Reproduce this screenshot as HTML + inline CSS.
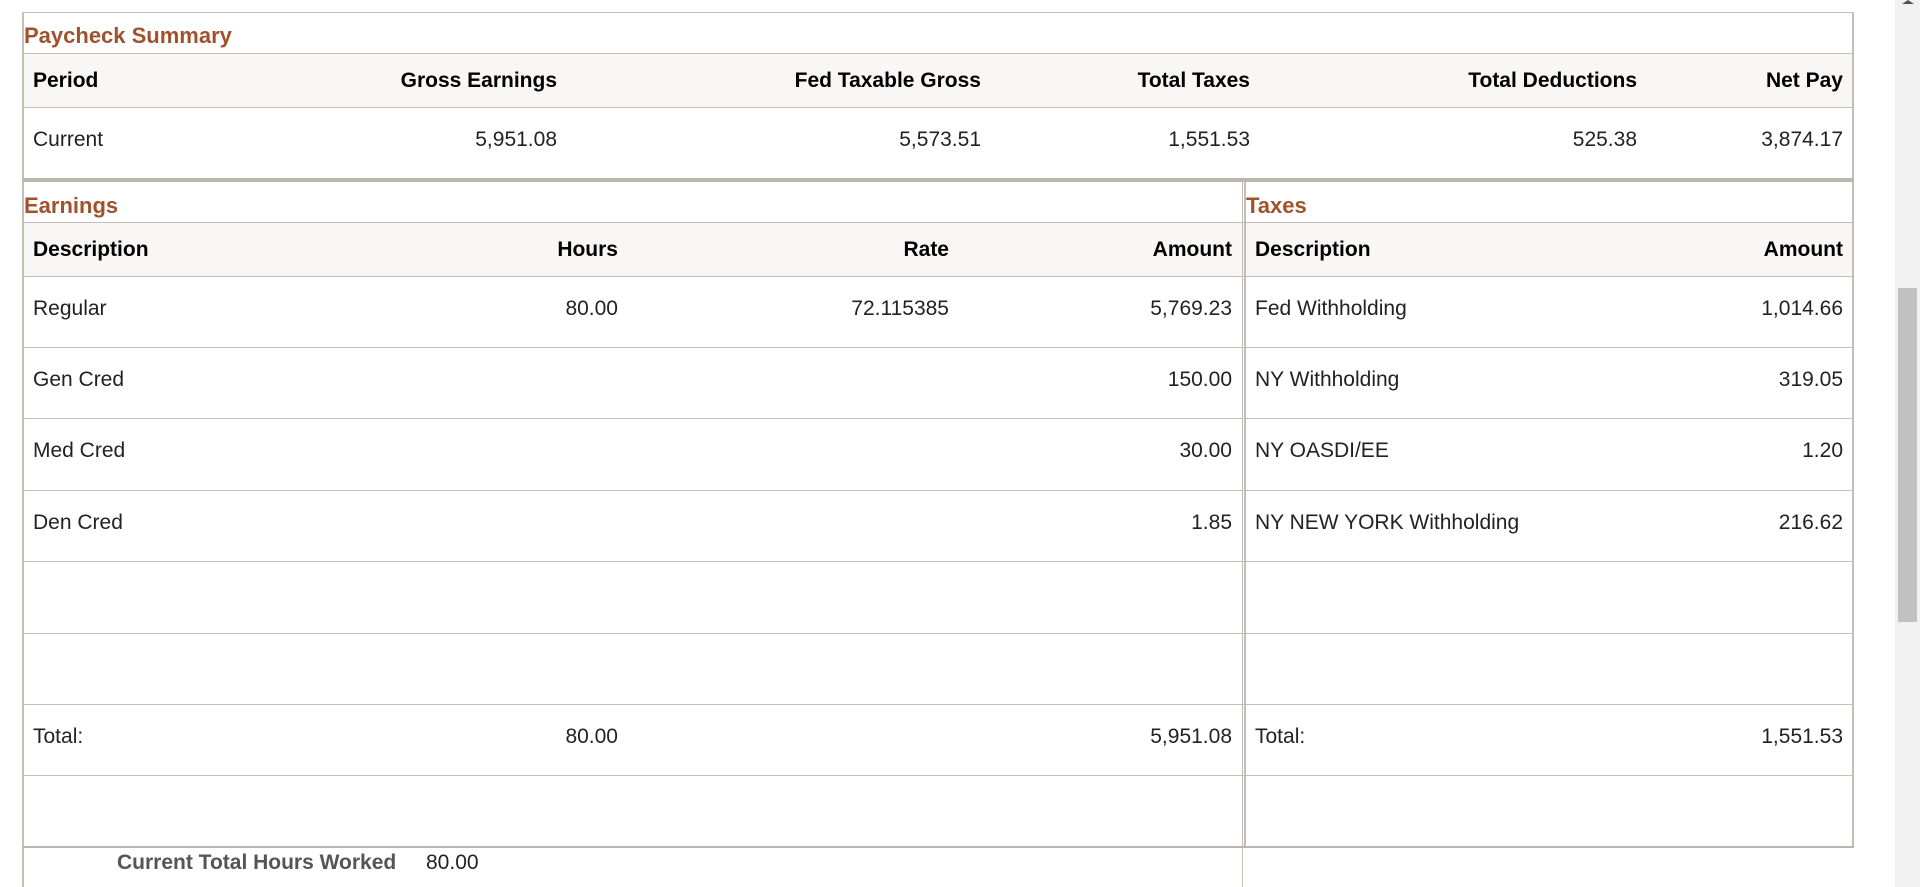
<!DOCTYPE html>
<html><head><meta charset="utf-8"><style>
html,body{margin:0;padding:0;background:#fff;width:1920px;height:887px;overflow:hidden;font-family:"Liberation Sans",Arial,sans-serif;}
.a{position:absolute;}
.t{position:absolute;display:flex;align-items:center;font-size:21px;color:#222;white-space:nowrap;}
.r{justify-content:flex-end;}
.b{font-weight:bold;color:#000;}
.h{position:absolute;color:#a0522d;font-weight:bold;font-size:22px;}
.hl{position:absolute;height:1px;background:#c4beb8;}
.vl{position:absolute;width:1px;background:#c4beb8;}
.bg{position:absolute;background:#f8f7f5;}
</style></head><body>
<!-- summary box -->
<div class="hl" style="left:22px;top:12px;width:1832px;"></div>
<div class="vl" style="left:22px;top:12px;height:875px;width:2px;"></div>
<div class="vl" style="left:1852px;top:12px;height:168px;width:2px;"></div>
<div class="h" style="left:24px;top:23px;">Paycheck Summary</div>
<div class="bg" style="left:24px;top:54px;width:1828px;height:53px;"></div>
<div class="hl" style="left:22px;top:53px;width:1832px;"></div>
<div class="hl" style="left:22px;top:107px;width:1832px;"></div>
<div class="a" style="left:22px;top:178px;width:1832px;height:4px;background:#bcb6af;"></div>
<div class="t b" style="left:33px;top:54px;height:53px;">Period</div>
<div class="t b r" style="right:1363px;top:54px;height:53px;">Gross Earnings</div>
<div class="t b r" style="right:939px;top:54px;height:53px;">Fed Taxable Gross</div>
<div class="t b r" style="right:670px;top:54px;height:53px;">Total Taxes</div>
<div class="t b r" style="right:283px;top:54px;height:53px;">Total Deductions</div>
<div class="t b r" style="right:77px;top:54px;height:53px;">Net Pay</div>
<div class="t" style="left:33px;top:107px;height:66px;">Current</div>
<div class="t r" style="right:1363px;top:107px;height:66px;">5,951.08</div>
<div class="t r" style="right:939px;top:107px;height:66px;">5,573.51</div>
<div class="t r" style="right:670px;top:107px;height:66px;">1,551.53</div>
<div class="t r" style="right:283px;top:107px;height:66px;">525.38</div>
<div class="t r" style="right:77px;top:107px;height:66px;">3,874.17</div>

<!-- earnings / taxes -->
<div class="h" style="left:24px;top:193px;">Earnings</div>
<div class="h" style="left:1246px;top:193px;">Taxes</div>
<div class="bg" style="left:24px;top:223px;width:1828px;height:53px;"></div>
<div class="vl" style="left:1242px;top:182px;height:705px;"></div>
<div class="vl" style="left:1244px;top:182px;height:665px;width:2px;"></div>
<div class="vl" style="left:1852px;top:182px;height:665px;width:2px;"></div>
<div class="hl" style="left:22px;top:222px;width:1832px;"></div>
<div class="hl" style="left:22px;top:276px;width:1832px;"></div>
<div class="hl" style="left:22px;top:347px;width:1832px;"></div>
<div class="hl" style="left:22px;top:418px;width:1832px;"></div>
<div class="hl" style="left:22px;top:490px;width:1832px;"></div>
<div class="hl" style="left:22px;top:561px;width:1832px;"></div>
<div class="hl" style="left:22px;top:633px;width:1832px;"></div>
<div class="hl" style="left:22px;top:704px;width:1832px;"></div>
<div class="hl" style="left:22px;top:775px;width:1832px;"></div>
<div class="hl" style="left:22px;top:846px;width:1832px;height:2px;background:#bcb6af;"></div>

<div class="t b" style="left:33px;top:223px;height:53px;">Description</div>
<div class="t b r" style="right:1302px;top:223px;height:53px;">Hours</div>
<div class="t b r" style="right:971px;top:223px;height:53px;">Rate</div>
<div class="t b r" style="right:688px;top:223px;height:53px;">Amount</div>
<div class="t b" style="left:1255px;top:223px;height:53px;">Description</div>
<div class="t b r" style="right:77px;top:223px;height:53px;">Amount</div>

<div class="t" style="left:33px;top:276px;height:66px;">Regular</div>
<div class="t r" style="right:1302px;top:276px;height:66px;">80.00</div>
<div class="t r" style="right:971px;top:276px;height:66px;">72.115385</div>
<div class="t r" style="right:688px;top:276px;height:66px;">5,769.23</div>
<div class="t" style="left:1255px;top:276px;height:66px;">Fed Withholding</div>
<div class="t r" style="right:77px;top:276px;height:66px;">1,014.66</div>

<div class="t" style="left:33px;top:347px;height:66px;">Gen Cred</div>
<div class="t r" style="right:688px;top:347px;height:66px;">150.00</div>
<div class="t" style="left:1255px;top:347px;height:66px;">NY Withholding</div>
<div class="t r" style="right:77px;top:347px;height:66px;">319.05</div>

<div class="t" style="left:33px;top:418px;height:66px;">Med Cred</div>
<div class="t r" style="right:688px;top:418px;height:66px;">30.00</div>
<div class="t" style="left:1255px;top:418px;height:66px;">NY OASDI/EE</div>
<div class="t r" style="right:77px;top:418px;height:66px;">1.20</div>

<div class="t" style="left:33px;top:490px;height:66px;">Den Cred</div>
<div class="t r" style="right:688px;top:490px;height:66px;">1.85</div>
<div class="t" style="left:1255px;top:490px;height:66px;">NY NEW YORK Withholding</div>
<div class="t r" style="right:77px;top:490px;height:66px;">216.62</div>

<div class="t" style="left:33px;top:704px;height:66px;">Total:</div>
<div class="t r" style="right:1302px;top:704px;height:66px;">80.00</div>
<div class="t r" style="right:688px;top:704px;height:66px;">5,951.08</div>
<div class="t" style="left:1255px;top:704px;height:66px;">Total:</div>
<div class="t r" style="right:77px;top:704px;height:66px;">1,551.53</div>

<div class="t" style="left:117px;top:848px;height:30px;font-weight:bold;color:#555;">Current Total Hours Worked</div>
<div class="t" style="left:426px;top:848px;height:30px;">80.00</div>

<!-- scrollbar -->
<div class="a" style="left:1895px;top:0;width:25px;height:887px;background:#f1f1f1;"></div>
<div class="a" style="left:1898px;top:288px;width:19px;height:334px;background:#c1c1c1;"></div>
<div class="a" style="left:1902px;top:0;width:0;height:0;border-left:6px solid transparent;border-right:6px solid transparent;border-bottom:4px solid #505050;"></div>
</body></html>
